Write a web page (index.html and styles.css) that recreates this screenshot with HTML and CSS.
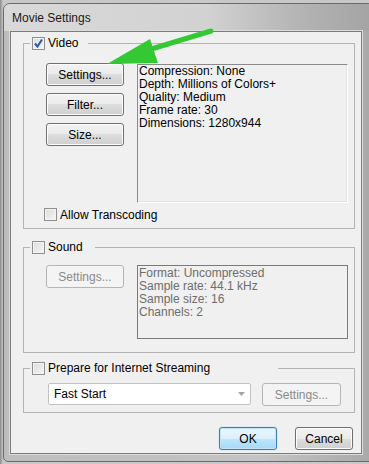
FILE: index.html
```html
<!DOCTYPE html>
<html lang="en">
<head>
    <meta charset="UTF-8">
    <title>Movie Settings</title>
    <link rel="stylesheet" href="styles.css">
</head>
<body>

<div class="window">
    <div class="titlebar">
        <span class="title">Movie Settings</span>
    </div>

    <div class="client">
        <!-- Video -->
        <fieldset class="group">
            <legend class="group-title title-video">
                <span class="check checked">
                    <svg width="11" height="11" viewBox="0 0 11 11"><path d="M2 5.5 L4.5 8.5 L9 1.5" fill="none" stroke="#2a5aa8" stroke-width="2"/></svg>
                </span>
                <span>Video</span>
            </legend>
            <div class="group-body body-video">
                <div class="media-row">
                    <div class="btn-col">
                        <button class="btn">Settings...</button>
                        <button class="btn">Filter...</button>
                        <button class="btn">Size...</button>
                    </div>
                    <div class="info info-video">
                        Compression: None<br>
                        Depth: Millions of Colors+<br>
                        Quality: Medium<br>
                        Frame rate: 30<br>
                        Dimensions: 1280x944
                    </div>
                </div>
                <div class="option">
                    <span class="check"></span>
                    <span>Allow Transcoding</span>
                </div>
            </div>
        </fieldset>

        <!-- Sound -->
        <fieldset class="group group-sound">
            <legend class="group-title title-sound">
                <span class="check"></span>
                <span>Sound</span>
            </legend>
            <div class="group-body body-sound">
                <div class="media-row">
                    <div class="btn-col">
                        <button class="btn" disabled>Settings...</button>
                    </div>
                    <div class="info info-sound">
                        Format: Uncompressed<br>
                        Sample rate: 44.1 kHz<br>
                        Sample size: 16<br>
                        Channels: 2
                    </div>
                </div>
            </div>
        </fieldset>

        <!-- Streaming -->
        <fieldset class="group group-stream">
            <legend class="group-title title-stream">
                <span class="check"></span>
                <span>Prepare for Internet Streaming</span>
            </legend>
            <div class="group-body body-stream">
                <div class="select">
                    <span>Fast Start</span>
                    <svg width="7" height="4" viewBox="0 0 7 4"><path d="M0 0 H7 L3.5 4 Z" fill="#a3a3a3"/></svg>
                </div>
                <button class="btn btn-stream" disabled>Settings...</button>
            </div>
        </fieldset>

        <div class="dialog-buttons">
            <button class="btn btn-default">OK</button>
            <button class="btn">Cancel</button>
        </div>
    </div>
</div>

<!-- annotation arrow -->
<svg class="arrow" width="369" height="464" viewBox="0 0 369 464">
    <line x1="148" y1="50" x2="211" y2="31" stroke="#34c934" stroke-width="5" stroke-linecap="round"/>
    <polygon points="107,64 150,39 158,63" fill="#34c934"/>
</svg>

</body>
</html>
```

FILE: styles.css
```css
* {
    box-sizing: border-box;
}

body {
    margin: 0;
    width: 369px;
    height: 464px;
    overflow: hidden;
    position: relative;
    background: linear-gradient(90deg, #8a8a8a 0px, #c8c8c8 3px);
    font-family: "Liberation Sans", Arial, sans-serif;
    font-size: 11px;
    color: #000;
}

/* Window frame */
.window {
    margin: 3px 0 0 3px;
    width: 372px;
    padding-bottom: 7px;
    border: 1px solid #6a6a6a;
    border-radius: 7px 7px 0 5px;
    background: linear-gradient(90deg, #bdbdbd, #c4c4c4 70%, #a8a8a8);
}

.titlebar {
    height: 27px;
    padding-left: 8px;
    display: flex;
    align-items: center;
    border-radius: 6px 6px 0 0;
    background: linear-gradient(90deg, #d9d9d9, #d2d2d2 55%, #b4b4b4 80%, #a3a3a3);
}

.title {
    font-size: 12px;
    color: #1a1a1a;
    margin-top: 1px;
}

.client {
    margin-left: 6px;
    width: 352px;
    padding: 5px 6px 3px 12px;
    background: #f0f0f0;
    border: 1px solid #7c7c7c;
    box-shadow: 0 0 0 1px #dcdcdc;
}

/* Group boxes */
.group {
    margin: 0;
    padding: 0;
    min-inline-size: 0;
    border: 1px solid #b4b4b4;
}

.group-sound {
    margin-top: 12px;
}

.group-stream {
    margin-top: 9px;
}

.group-title {
    display: flex;
    align-items: center;
    gap: 3px;
    height: 13px;
    margin-left: 6px;
    padding: 0 2px;
    line-height: 13px;
    font-size: 12px;
}

.title-video { width: 58px; }
.title-sound { width: 65px; }
.title-stream { width: 248px; }

.check {
    width: 13px;
    height: 13px;
    flex: none;
    display: flex;
    align-items: center;
    justify-content: center;
    border: 1px solid #8f8f8f;
    background: linear-gradient(135deg, #dcdcdc, #f6f6f6);
    box-shadow: inset 0 0 0 1px #f4f4f4;
}

.group-body {
    padding: 13px 6px 7px 22px;
}

.body-sound {
    padding-top: 11px;
    padding-bottom: 13px;
}

.body-stream {
    display: flex;
    align-items: flex-start;
    gap: 11px;
    padding: 8px 0 6px 24px;
}

.media-row {
    display: flex;
    align-items: flex-start;
    gap: 13px;
}

.btn-col {
    width: 78px;
    flex: none;
    display: flex;
    flex-direction: column;
    gap: 7px;
}

/* Buttons */
.btn {
    height: 23px;
    padding: 0;
    font-family: inherit;
    font-size: 12px;
    color: #000;
    border: 1px solid #707070;
    border-radius: 3px;
    background: linear-gradient(#f2f2f2, #ebebeb 50%, #dddddd 50%, #cfcfcf);
    box-shadow: inset 0 0 0 1px #fcfcfc;
}

.btn:disabled {
    color: #8a8a8a;
    border-color: #b5b5b5;
    background: #f4f4f4;
    box-shadow: none;
}

.btn-default {
    border-color: #3c7fb1;
    background: linear-gradient(#eaf6fd, #d9f0fc 50%, #bee6fd 50%, #a7d9f5);
    box-shadow: inset 0 0 0 1px #c2e4f6, 0 0 1px #5fb4e6;
}

.btn-stream {
    width: 79px;
}

/* Info boxes */
.info {
    flex: 1;
    font-size: 12px;
    line-height: 13px;
    white-space: nowrap;
}

.info-video {
    margin-top: 1px;
    height: 139px;
    padding: 0 1px;
    border: 1px solid;
    border-color: #8a8a8a #ffffff #ffffff #8a8a8a;
    box-shadow: inset -1px -1px #e2e2e2;
}

.info-sound {
    height: 74px;
    padding: 1px 1px;
    color: #6d6d6d;
    border: 1px solid #7a7a7a;
}

.option {
    display: flex;
    align-items: center;
    gap: 3px;
    margin: 5px 0 0 -2px;
    height: 13px;
    font-size: 12px;
}

/* Dropdown */
.select {
    width: 203px;
    height: 22px;
    display: flex;
    align-items: center;
    justify-content: space-between;
    padding: 0 5px 0 5px;
    font-size: 12px;
    background: #fff;
    border: 1px solid #c2c2c2;
    border-radius: 2px;
}

.dialog-buttons {
    display: flex;
    justify-content: flex-end;
    gap: 18px;
    margin-top: 14px;
    padding-right: 2px;
}

.dialog-buttons .btn {
    width: 58px;
}

.arrow {
    position: absolute;
    left: 0;
    top: 0;
    pointer-events: none;
}
```
